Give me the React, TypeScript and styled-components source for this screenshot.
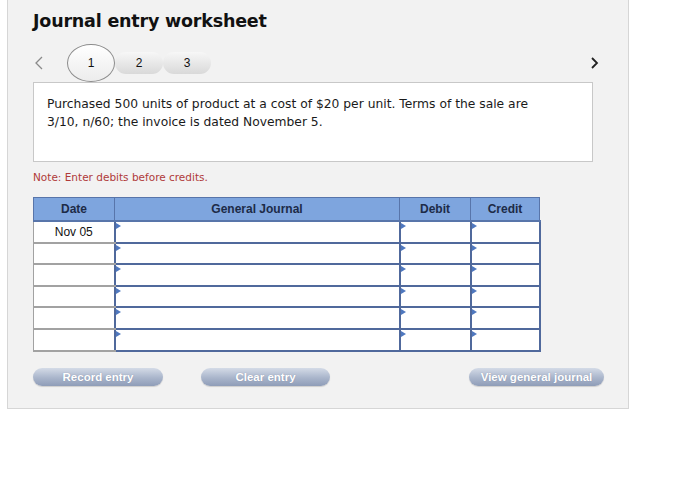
import React from 'react';
import styled, { createGlobalStyle } from 'styled-components';

const Global = createGlobalStyle`
  body {
    margin: 0;
    background: #ffffff;
    font-family: "DejaVu Sans", Verdana, sans-serif;
  }
`;

const S = {
  Panel: styled.div`
    margin-left: 7px;
    margin-top: -1px;
    width: 595px;
    border: 1px solid #d6d6d6;
    background: #f2f2f2;
    padding: 10px 0 22px 25px;
  `,

  Title: styled.h1`
    margin: 0;
    font-size: 17.5px;
    line-height: 22px;
    font-weight: bold;
    color: #111;
    letter-spacing: -0.2px;
  `,

  TabBar: styled.div`
    margin-top: 12px;
    width: 568px;
    height: 38px;
    display: flex;
    align-items: center;
  `,

  Chevron: styled.button`
    border: 0;
    background: none;
    padding: 0;
    display: flex;
    align-items: center;
    justify-content: center;
  `,

  Tabs: styled.div`
    display: flex;
    align-items: center;
    margin-left: 22px;
    flex: 1;
  `,

  Tab: styled.div<{ $active?: boolean }>`
    width: 48px;
    height: ${(p) => (p.$active ? '38px' : '22px')};
    border-radius: ${(p) => (p.$active ? '50%' : '11px')};
    border: ${(p) => (p.$active ? '1px solid #8c8c8c' : '0')};
    background: ${(p) =>
      p.$active
        ? 'linear-gradient(#ffffff, #ececec)'
        : 'linear-gradient(#f7f7f7, #d9d9d9)'};
    display: flex;
    align-items: center;
    justify-content: center;
    font-family: "Liberation Sans", Arial, sans-serif;
    font-size: 12px;
    color: #111;
    box-sizing: border-box;
    position: relative;
    z-index: ${(p) => (p.$active ? 1 : 0)};
  `,

  Question: styled.div`
    width: 560px;
    height: 80px;
    box-sizing: border-box;
    border: 1px solid #c8c8c8;
    background: #fff;
    padding: 12px 13px;
    font-size: 12.3px;
    line-height: 18px;
    color: #1a1a1a;
  `,

  Note: styled.p`
    margin: 8px 0 0;
    font-size: 10.5px;
    line-height: 14px;
    color: #b03a3a;
  `,

  Table: styled.table`
    margin-top: 13px;
    border-collapse: collapse;
    table-layout: fixed;
    width: 502px;
    font-family: "Liberation Sans", Arial, sans-serif;
    font-size: 12px;
  `,

  Head: styled.th<{ $w: number }>`
    width: ${(p) => p.$w}px;
    height: 22px;
    padding: 0;
    background: #7ea5de;
    border: 1px solid #5875aa;
    border-bottom: 2px solid #5875aa;
    color: #1d2b47;
    font-weight: bold;
    text-align: center;
  `,

  DateCell: styled.td`
    height: 19.6px;
    padding: 0;
    background: #fff;
    border: 1px solid #a2a2a2;
    border-bottom-width: 2px;
    text-align: center;
    color: #111;
  `,

  InputCell: styled.td`
    height: 18.6px;
    padding: 0;
    background: #fff;
    border: 2px solid #50699c;
    position: relative;

    &::before {
      content: '';
      position: absolute;
      left: 0;
      top: 1px;
      border-left: 5px solid #4f78bf;
      border-top: 3px solid transparent;
      border-bottom: 3px solid transparent;
    }
  `,

  Buttons: styled.div`
    margin-top: 16px;
    width: 571px;
    display: flex;
    align-items: center;
  `,

  Button: styled.button<{ $w: number; $push?: boolean }>`
    width: ${(p) => p.$w}px;
    height: 18px;
    margin-left: ${(p) => (p.$push ? 'auto' : '0')};
    border: 0;
    border-radius: 9px;
    background: linear-gradient(#d4dbe7, #a9b5cb 55%, #8f9db8);
    box-shadow: 0 1px 1px rgba(0, 0, 0, 0.15);
    color: #fff;
    font-family: "Liberation Sans Narrow", "Liberation Sans", Arial, sans-serif;
    font-weight: bold;
    font-size: 11.5px;
    text-shadow: 0 0 1px rgba(90, 100, 130, 0.5);
    padding: 0;
  `,

  Gap: styled.div<{ $w: number }>`
    width: ${(p) => p.$w}px;
  `,
};

const rows = ['Nov 05', '', '', '', '', ''];

const Left = () => (
  <svg width="12" height="16" viewBox="0 0 12 16">
    <polyline points="9,2 3,8 9,14" fill="none" stroke="#8a8a8a" strokeWidth="1.3" />
  </svg>
);

const Right = () => (
  <svg width="12" height="16" viewBox="0 0 12 16">
    <polyline points="3,3 8,8 3,13" fill="none" stroke="#222" strokeWidth="1.8" />
  </svg>
);

export default function App() {
  return (
    <>
      <Global />
      <S.Panel>
        <S.Title>Journal entry worksheet</S.Title>

        <S.TabBar>
          <S.Chevron aria-label="previous">
            <Left />
          </S.Chevron>
          <S.Tabs>
            <S.Tab $active>1</S.Tab>
            <S.Tab>2</S.Tab>
            <S.Tab>3</S.Tab>
          </S.Tabs>
          <S.Chevron aria-label="next">
            <Right />
          </S.Chevron>
        </S.TabBar>

        <S.Question>
          Purchased 500 units of product at a cost of $20 per unit. Terms of the sale are
          <br />
          3/10, n/60; the invoice is dated November 5.
        </S.Question>

        <S.Note>Note: Enter debits before credits.</S.Note>

        <S.Table>
          <thead>
            <tr>
              <S.Head $w={80}>Date</S.Head>
              <S.Head $w={284}>General Journal</S.Head>
              <S.Head $w={70}>Debit</S.Head>
              <S.Head $w={68}>Credit</S.Head>
            </tr>
          </thead>
          <tbody>
            {rows.map((d, i) => (
              <tr key={i}>
                <S.DateCell>{d}</S.DateCell>
                <S.InputCell />
                <S.InputCell />
                <S.InputCell />
              </tr>
            ))}
          </tbody>
        </S.Table>

        <S.Buttons>
          <S.Button $w={130}>Record entry</S.Button>
          <S.Gap $w={38} />
          <S.Button $w={129}>Clear entry</S.Button>
          <S.Button $w={135} $push>
            View general journal
          </S.Button>
        </S.Buttons>
      </S.Panel>
    </>
  );
}
